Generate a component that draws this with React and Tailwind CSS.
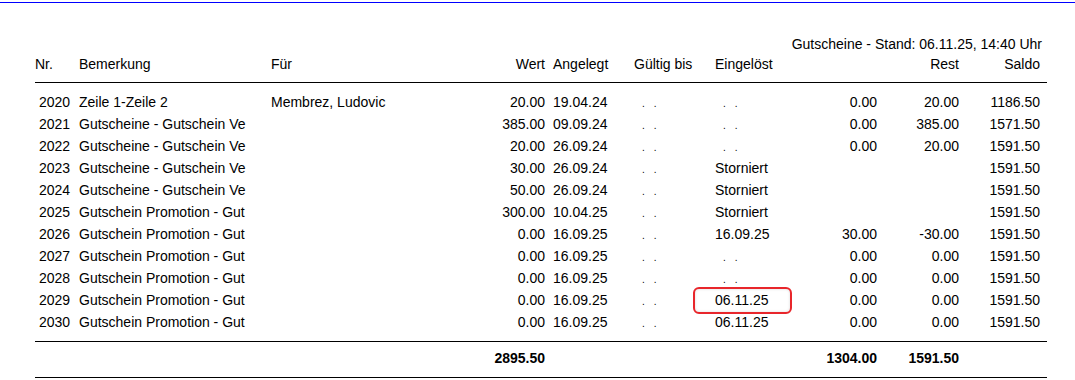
import React from "react";

const rows = [
  ["2020", "Zeile 1-Zeile 2", "Membrez, Ludovic", "20.00", "19.04.24", "dots", "dots", "0.00", "20.00", "1186.50"],
  ["2021", "Gutscheine - Gutschein Ve", "", "385.00", "09.09.24", "dots", "dots", "0.00", "385.00", "1571.50"],
  ["2022", "Gutscheine - Gutschein Ve", "", "20.00", "26.09.24", "dots", "dots", "0.00", "20.00", "1591.50"],
  ["2023", "Gutscheine - Gutschein Ve", "", "30.00", "26.09.24", "dots", "Storniert", "", "", "1591.50"],
  ["2024", "Gutscheine - Gutschein Ve", "", "50.00", "26.09.24", "dots", "Storniert", "", "", "1591.50"],
  ["2025", "Gutschein Promotion - Gut", "", "300.00", "10.04.25", "dots", "Storniert", "", "", "1591.50"],
  ["2026", "Gutschein Promotion - Gut", "", "0.00", "16.09.25", "dots", "16.09.25", "30.00", "-30.00", "1591.50"],
  ["2027", "Gutschein Promotion - Gut", "", "0.00", "16.09.25", "dots", "dots", "0.00", "0.00", "1591.50"],
  ["2028", "Gutschein Promotion - Gut", "", "0.00", "16.09.25", "dots", "dots", "0.00", "0.00", "1591.50"],
  ["2029", "Gutschein Promotion - Gut", "", "0.00", "16.09.25", "dots", "06.11.25", "0.00", "0.00", "1591.50", true],
  ["2030", "Gutschein Promotion - Gut", "", "0.00", "16.09.25", "dots", "06.11.25", "0.00", "0.00", "1591.50"],
];

const grid =
  "grid grid-cols-[44px_192px_202px_80px_81px_81px_82px_80px_82px_81px_7px]";

function Dots() {
  return (
    <span className="whitespace-pre text-[10px] text-black">
      <span className="pl-[8px]">.</span>
      <span className="pl-[9px]">.</span>
    </span>
  );
}

function Cell({ v }) {
  if (v === "dots") return <Dots />;
  return v;
}

export default function App() {
  return (
    <div
      className="w-[1075px] h-[380px] bg-white overflow-hidden text-black text-[14px]"
      style={{ fontFamily: '"Liberation Sans", Arial, sans-serif' }}
    >
      <div className="pt-[2px]">
        <div className="h-px bg-[#0000ff]" />
      </div>
      <div className="ml-[35px] w-[1012px]">
        <div className="mt-[31px] h-[20px] leading-[20px] text-right pr-[5px] whitespace-nowrap">
          Gutscheine - Stand: 06.11.25, 14:40 Uhr
        </div>
        <div className={`${grid} h-[20px] leading-[20px] whitespace-nowrap`}>
          <div>Nr.</div>
          <div>Bemerkung</div>
          <div>Für</div>
          <div className="text-right pr-[8px]">Wert</div>
          <div>Angelegt</div>
          <div>Gültig bis</div>
          <div>Eingelöst</div>
          <div></div>
          <div className="text-right">Rest</div>
          <div className="text-right">Saldo</div>
          <div></div>
        </div>
        <div className="mt-[8px] h-px bg-black" />
        <div className="mt-[8px]">
          {rows.map((r) => (
            <div
              key={r[0]}
              className={`${grid} h-[22px] leading-[22px] whitespace-nowrap`}
            >
              <div className="pl-[4px]">{r[0]}</div>
              <div className="overflow-hidden">{r[1]}</div>
              <div>{r[2]}</div>
              <div className="text-right pr-[8px]">{r[3]}</div>
              <div>{r[4]}</div>
              <div>
                <Cell v={r[5]} />
              </div>
              <div className="relative">
                {r[10] && (
                  <div className="absolute -left-[22px] -top-[2px] w-[99px] h-[27px] rounded-[6px] border-2 border-[#e8262b] shadow-[inset_0_0_3px_rgba(0,0,0,0.15)]" />
                )}
                <span className="relative">
                  <Cell v={r[6]} />
                </span>
              </div>
              <div className="text-right">{r[7]}</div>
              <div className="text-right">{r[8]}</div>
              <div className="text-right">{r[9]}</div>
              <div></div>
            </div>
          ))}
        </div>
        <div className="mt-[8px] h-px bg-black" />
        <div className={`${grid} mt-[5px] h-[22px] leading-[22px] font-bold whitespace-nowrap`}>
          <div></div>
          <div></div>
          <div></div>
          <div className="text-right pr-[8px]">2895.50</div>
          <div></div>
          <div></div>
          <div></div>
          <div className="text-right">1304.00</div>
          <div className="text-right">1591.50</div>
          <div></div>
          <div></div>
        </div>
        <div className="mt-[8px] h-px bg-black" />
      </div>
    </div>
  );
}
